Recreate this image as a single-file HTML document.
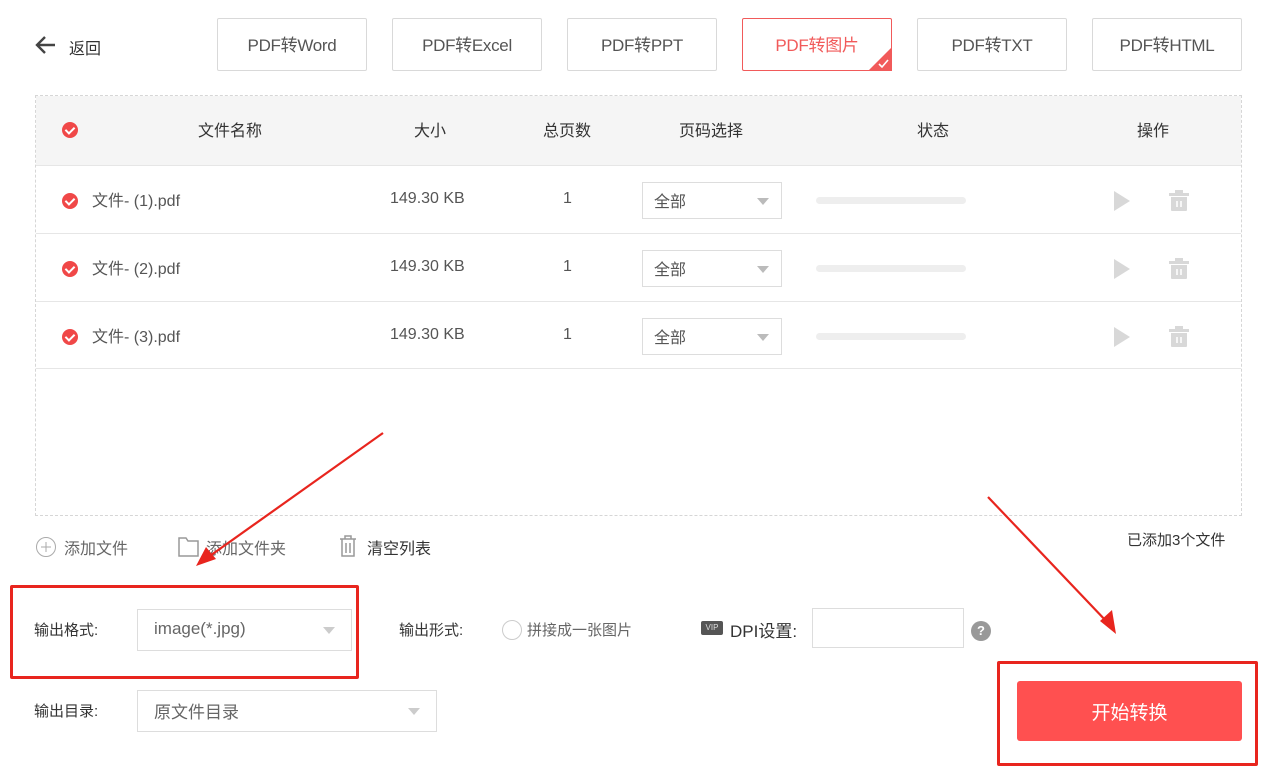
<!DOCTYPE html>
<html><head><meta charset="utf-8"><style>
*{margin:0;padding:0;box-sizing:border-box}
body{width:1277px;height:769px;background:#fff;position:relative;overflow:hidden;font-family:"Liberation Sans","Noto Sans CJK SC",sans-serif;color:#333;font-size:16px}
.a{position:absolute}
.tab{position:absolute;top:18px;width:150px;height:53px;border:1px solid #d9d9d9;border-radius:2px;display:flex;align-items:center;justify-content:center;color:#555;font-size:17px;background:#fff;padding-bottom:3px;letter-spacing:-0.3px}
.tab.on{border-color:#f15a5a;color:#f15a5a}
.chk{position:absolute;width:16px;height:16px;border-radius:50%;background:#f04848}
.chk:after{content:"";position:absolute;left:5px;top:3px;width:4px;height:7px;border:solid #fff;border-width:0 2px 2px 0;transform:rotate(45deg)}
.hd{position:absolute;top:117px;font-size:16px;color:#333;transform:translateX(-50%)}
.row{position:absolute;left:36px;width:1205px;height:68px;border-top:1px solid #e6e6e6}
.cell{position:absolute;top:0;height:66px;display:flex;align-items:center;font-size:16px;color:#555}
.sel{position:absolute;border:1px solid #ddd;background:#fff;display:flex;align-items:center;padding-left:11px;color:#555;padding-bottom:2px}
.tri{position:absolute;width:0;height:0;border-left:6px solid transparent;border-right:6px solid transparent;border-top:7px solid #bbb}
.bar{position:absolute;left:780px;top:31px;width:150px;height:7px;border-radius:4px;background:#eee}
</style></head><body>
<div class="a" style="left:34px;top:33px"><svg width="24" height="24" viewBox="0 0 24 24"><path d="M21 12H4M11 4l-8 8 8 8" stroke="#444" stroke-width="2.4" fill="none"/></svg></div>
<div class="a" style="left:69px;top:35px;font-size:16px;color:#333">返回</div>
<div class="tab" style="left:217px">PDF转Word</div>
<div class="tab" style="left:392px">PDF转Excel</div>
<div class="tab" style="left:567px">PDF转PPT</div>
<div class="tab on" style="left:742px">PDF转图片<svg class="a" style="right:-1px;bottom:-1px" width="24" height="24"><path d="M24 0V24H0Z" fill="#f15a5a"/><path d="M11 17l3 3 6-7" stroke="#fff" stroke-width="1.6" fill="none"/></svg></div>
<div class="tab" style="left:917px">PDF转TXT</div>
<div class="tab" style="left:1092px">PDF转HTML</div>

<div class="a" style="left:35px;top:95px;width:1207px;height:421px;border:1px dashed #d6d6d6"></div>
<div class="a" style="left:36px;top:96px;width:1205px;height:69px;background:#f5f5f5"></div>
<div class="chk" style="left:62px;top:122px"></div>
<div class="hd" style="left:230px">文件名称</div>
<div class="hd" style="left:430px">大小</div>
<div class="hd" style="left:567px">总页数</div>
<div class="hd" style="left:711px">页码选择</div>
<div class="hd" style="left:933px">状态</div>
<div class="hd" style="left:1153px">操作</div>

<div class="row" style="top:165px">
<div class="chk" style="left:26px;top:27px"></div>
<div class="cell" style="left:56px">文件- (1).pdf</div>
<div class="cell" style="left:354px">149.30 KB</div>
<div class="cell" style="left:527px">1</div>
<div class="sel" style="left:606px;top:16px;width:140px;height:37px">全部<div class="tri" style="right:12px;top:15px"></div></div>
<div class="bar"></div>
<svg class="a" style="left:1076px;top:24px" width="20" height="22"><path d="M2 1L18 11 2 21Z" fill="#d8d8d8"/></svg>
<svg class="a" style="left:1132px;top:23px" width="22" height="23"><path d="M7 1h8v3h6v3H1V4h6Z M3 8h16v13a1 1 0 0 1-1 1H4a1 1 0 0 1-1-1Z" fill="#d8d8d8"/><path d="M9 12v6M13 12v6" stroke="#fff" stroke-width="1.5"/></svg>
</div>
<div class="row" style="top:233px">
<div class="chk" style="left:26px;top:27px"></div>
<div class="cell" style="left:56px">文件- (2).pdf</div>
<div class="cell" style="left:354px">149.30 KB</div>
<div class="cell" style="left:527px">1</div>
<div class="sel" style="left:606px;top:16px;width:140px;height:37px">全部<div class="tri" style="right:12px;top:15px"></div></div>
<div class="bar"></div>
<svg class="a" style="left:1076px;top:24px" width="20" height="22"><path d="M2 1L18 11 2 21Z" fill="#d8d8d8"/></svg>
<svg class="a" style="left:1132px;top:23px" width="22" height="23"><path d="M7 1h8v3h6v3H1V4h6Z M3 8h16v13a1 1 0 0 1-1 1H4a1 1 0 0 1-1-1Z" fill="#d8d8d8"/><path d="M9 12v6M13 12v6" stroke="#fff" stroke-width="1.5"/></svg>
</div>
<div class="row" style="top:301px;border-bottom:1px solid #e6e6e6">
<div class="chk" style="left:26px;top:27px"></div>
<div class="cell" style="left:56px">文件- (3).pdf</div>
<div class="cell" style="left:354px">149.30 KB</div>
<div class="cell" style="left:527px">1</div>
<div class="sel" style="left:606px;top:16px;width:140px;height:37px">全部<div class="tri" style="right:12px;top:15px"></div></div>
<div class="bar"></div>
<svg class="a" style="left:1076px;top:24px" width="20" height="22"><path d="M2 1L18 11 2 21Z" fill="#d8d8d8"/></svg>
<svg class="a" style="left:1132px;top:23px" width="22" height="23"><path d="M7 1h8v3h6v3H1V4h6Z M3 8h16v13a1 1 0 0 1-1 1H4a1 1 0 0 1-1-1Z" fill="#d8d8d8"/><path d="M9 12v6M13 12v6" stroke="#fff" stroke-width="1.5"/></svg>
</div>

<svg class="a" style="left:35px;top:536px" width="22" height="22"><circle cx="11" cy="11" r="9.5" stroke="#aaa" fill="none"/><path d="M11 6v10M6 11h10" stroke="#aaa"/></svg>
<div class="a" style="left:64px;top:535px;color:#666">添加文件</div>
<svg class="a" style="left:178px;top:536px" width="22" height="22"><path d="M1 2h7l2 3h10v15H1Z" stroke="#999" fill="none" stroke-width="1.5"/></svg>
<div class="a" style="left:206px;top:535px;color:#666">添加文件夹</div>
<svg class="a" style="left:337px;top:534px" width="22" height="24"><path d="M3 5h16M8 5V2h6v3M5 5v17h12V5M9 9v10M13 9v10" stroke="#999" fill="none" stroke-width="1.5"/></svg>
<div class="a" style="left:367px;top:535px;color:#333">清空列表</div>
<div class="a" style="left:1127px;top:529px;color:#333;font-size:15px">已添加3个文件</div>

<div class="a" style="left:34px;top:619px;color:#333;font-size:15px">输出格式:</div>
<div class="sel" style="left:137px;top:609px;width:215px;height:42px;font-size:17px;color:#666;padding-left:16px">image(*.jpg)<div class="tri" style="right:16px;top:17px;border-top-color:#ccc"></div></div>
<div class="a" style="left:399px;top:619px;color:#333;font-size:15px">输出形式:</div>
<div class="a" style="left:502px;top:620px;width:20px;height:20px;border:1px solid #ccc;border-radius:50%"></div>
<div class="a" style="left:527px;top:619px;color:#666;font-size:15px">拼接成一张图片</div>
<div class="a" style="left:701px;top:621px;width:22px;height:14px;background:#555;border-radius:2px;color:#ddd;font-size:8px;line-height:14px;text-align:center">VIP</div>
<div class="a" style="left:730px;top:617px;color:#333;font-size:17px">DPI设置:</div>
<div class="a" style="left:812px;top:608px;width:152px;height:40px;border:1px solid #ddd"></div>
<div class="a" style="left:971px;top:621px;width:20px;height:20px;border-radius:50%;background:#999;color:#fff;font-size:13px;font-weight:bold;text-align:center;line-height:20px">?</div>

<div class="a" style="left:34px;top:700px;color:#333;font-size:15px">输出目录:</div>
<div class="sel" style="left:137px;top:690px;width:300px;height:42px;font-size:17px;color:#666;padding-left:16px">原文件目录<div class="tri" style="right:16px;top:17px;border-top-color:#ccc"></div></div>

<div class="a" style="left:1017px;top:681px;width:225px;height:60px;background:#ff5050;border-radius:3px;color:#fff;font-size:19px;display:flex;align-items:center;justify-content:center">开始转换</div>

<div class="a" style="left:10px;top:585px;width:349px;height:94px;border:3px solid #e8251e;border-radius:2px"></div>
<div class="a" style="left:997px;top:661px;width:261px;height:105px;border:3px solid #e8251e;border-radius:2px"></div>
<svg class="a" style="left:0;top:0" width="1277" height="769"><g stroke="#e8251e" stroke-width="2.2" fill="#e8251e">
<line x1="383" y1="433" x2="207" y2="558"/><path d="M196 566L206 547L216 559Z" stroke="none"/>
<line x1="988" y1="497" x2="1108" y2="623"/><path d="M1116 634L1100 621L1112 610Z" stroke="none"/>
</g></svg>
</body></html>
